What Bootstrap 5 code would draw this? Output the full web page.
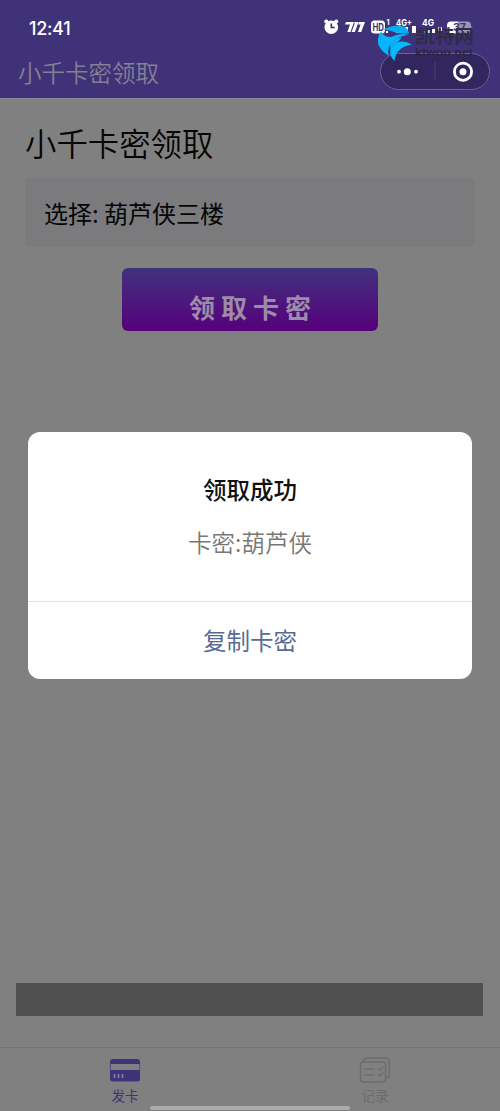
<!DOCTYPE html>
<html lang="zh-CN">
<head>
<meta charset="utf-8">
<meta name="viewport" content="width=device-width, initial-scale=1">
<title>小千卡密领取</title>
<link href="https://cdn.jsdelivr.net/npm/bootstrap@5.3.0/dist/css/bootstrap.min.css" rel="stylesheet">
<style>
body{font-family:"Noto Sans CJK SC",sans-serif;background:#808080;color:#050505;line-height:1}
.phone{height:1111px;overflow:hidden}
.topbar{height:99px;background:#403279;border-bottom:1px solid #8b8794}
.status{height:54px;padding:4px 27px 0 29px}
.clock{font:500 18px/1 Inter,sans-serif;color:#fff;letter-spacing:-.3px}
.icons{left:320px;top:14px}
.app-title{font-size:23.5px;font-weight:350;color:#858092;padding:7px 0 0 18px}
.capsule{right:10px;top:53px;width:110px;height:37px;border:1px solid #6b6293;border-radius:19px;background:#31265d}
.brand{left:376px;top:22px}
.page-title{font-size:31.4px;font-weight:350;line-height:40px;padding:24px 0 0 25px;margin:0}
.picker{height:69px;margin:15px 25px 0;padding-left:19px;background:#7b7b7d;border-radius:5px;font-size:24px;font-weight:400}
.claim{width:256px;height:63px;margin-top:21px;padding:14px 0 0 6px;border:0;border-radius:6px;background:linear-gradient(#40327d,#57007c);color:#9d8ba7;font-size:26px;font-weight:700;letter-spacing:6px;line-height:1}
.strip{height:33px;margin:0 17px 31px 16px;background:#505050}
.tabs{height:64px;border-top:1px solid #707070}
.tab-item{padding-top:9px;font-size:13.5px;color:#6c6c6c}
.tab-item.on{color:#403279}
.tab-item span{margin-top:6px}
.home-line{left:150px;bottom:1px;width:200px;height:4px;border-radius:2px;background:#aaa}
.dialog-box{left:28px;top:432px;width:444px;height:247px;background:#fff;border-radius:12px}
.dialog-main{height:170px;border-bottom:1px solid #e3e3e3;padding-top:45px}
.dialog-main h2{font-size:23.5px;font-weight:500;color:#111;margin:0;line-height:24px}
.dialog-main p{font-size:23.5px;font-weight:350;color:#777;margin:29px 0 0;line-height:24px}
.copy{font-size:23.5px;color:#576b95;border:0;background:none;padding:1px 0 0}
</style>
</head>
<body>
<div class="phone position-relative d-flex flex-column">
  <header class="topbar position-relative flex-shrink-0">
    <div class="status d-flex align-items-center"><span class="clock">12:41</span></div>
    <svg class="icons position-absolute" width="160" height="26" viewBox="320 14 160 26">
      <g fill="#fff"><circle cx="331.300" cy="27.200" r="6.800"/><circle cx="326.300" cy="21.500" r="2.100"/><circle cx="336.300" cy="21.500" r="2.100"/>
      <path d="M346 22h8l-3.500 10h-3.200l2.700-7.500h-5zM354.500 22h4l-3.600 10h-3.300l2.800-7.500zM359 22h6l-3.800 10h-3.300l2.700-7.500h-2.500z"/>
      <rect x="371" y="20.500" width="14" height="13" rx="3.500"/>
      <path d="M386 33v-2h2v2zM396 33v-4h3v4zM401 33v-5h3v5zM405 33v-6h3v6zM412 33v-7h4v7zM422 33v-2h3v2zM427 33v-3h3v3zM432 33v-4h3v4zM438 33v-6h4v6z"/>
      <path d="M451 21.500h7v12h-7q-4 0-4-4v-4q0-4 4-4"/></g>
      <path d="M331.300 23.500v4h3.500" fill="none" stroke="#403279" stroke-width="1.700"/>
      <path d="M458 21.500h9q4 0 4 4v4q0 4-4 4h-9zM471.500 25.500q1.500 2 0 4z" fill="#9d94ba"/>
      <g font-family="Inter,sans-serif" font-weight="700"><text x="372.500" y="30.600" font-size="10" fill="#403279" textLength="11.500" lengthAdjust="spacingAndGlyphs">HD</text>
      <text x="386.500" y="25" font-size="7" fill="#fff">1</text><text x="396" y="26" font-size="8.800" fill="#fff" textLength="16" lengthAdjust="spacingAndGlyphs">4G+</text><text x="422" y="26" font-size="8.800" fill="#fff" textLength="12" lengthAdjust="spacingAndGlyphs">4G</text>
      <text x="453" y="30.500" font-size="10.500" fill="#403568" textLength="13" lengthAdjust="spacingAndGlyphs">37</text></g>
    </svg>
    <div class="app-title">小千卡密领取</div>
    <div class="capsule position-absolute">
      <svg class="d-block" width="108" height="35" viewBox="381 54 108 35"><g fill="#fff"><circle cx="399" cy="71.700" r="1.900"/><circle cx="407.300" cy="71.700" r="3.500"/><circle cx="416" cy="71.700" r="1.900"/><circle cx="463" cy="71.700" r="3.500"/></g><path d="M435 62v19" stroke="#4b4175"/><circle cx="463" cy="71.700" r="8.600" fill="none" stroke="#fff" stroke-width="2.800"/></svg>
    </div>
    <svg class="brand position-absolute" width="104" height="40" viewBox="376 22 104 40">
      <path d="M383 29.500Q391 25.500 399 25.500Q408 26 409 33.500Q398 34 391 31Q387 29.500 383 29.500Z" fill="#08aef5"/>
      <path d="M381 31.500Q384 37 391 37Q399 33 409 34.500Q395 37 390 45Q387 51 389 56Q381 51 378.500 45Q376.500 38 381 31.500Z" fill="#08b4fb"/>
      <path d="M412 44.500Q403 46 399.500 50Q395.500 53 394.500 61Q389 56 390.500 50Q393 42 402 41.500Q407 41.500 412 44.500Z" fill="#06b9ff"/>
      <path d="M390 45Q394 38 402 37L398 42Q392 45 390.500 52Z" fill="#08aef5"/>
      <text x="415" y="42.500" font-family="Noto Sans CJK SC,sans-serif" font-size="18" font-weight="700" fill="#302b46" textLength="59" lengthAdjust="spacingAndGlyphs">凯特网</text>
      <text x="415" y="55.500" font-family="Liberation Sans,sans-serif" font-size="10" font-weight="700" fill="#2c2744" textLength="58" lengthAdjust="spacingAndGlyphs">ktwop.net</text>
    </svg>
  </header>
  <main class="flex-grow-1 d-flex flex-column">
    <h1 class="page-title">小千卡密领取</h1>
    <div class="picker d-flex align-items-center">选择: 葫芦侠三楼</div>
    <button class="claim btn align-self-center">领取卡密</button>
    <div class="strip mt-auto"></div>
  </main>
  <nav class="tabs row g-0 flex-shrink-0">
    <div class="tab-item on col-6 d-flex flex-column align-items-center">
      <svg width="32" height="26" viewBox="0 0 32 26"><path d="M4 2h24q3 0 3 3v2H1V5q0-3 3-3M1 13h30v9q0 2.500-3 2.500H4q-3 0-3-2.500z" fill="currentColor"/><path d="M1.300 7v6M30.700 7v6" stroke="currentColor" stroke-width=".7"/><path d="M5.500 17v4M9.500 17v4M13.500 17v4" stroke="#8c83a7" stroke-width="1.600"/></svg>
      <span>发卡</span>
    </div>
    <div class="tab-item col-6 d-flex flex-column align-items-center">
      <svg width="32" height="26" viewBox="0 0 32 26" fill="none" stroke="currentColor" stroke-width="1.400" stroke-linecap="round"><rect x="1.500" y="5" width="25" height="20" rx="3"/><path d="M4.500 4.500Q5 1 8 1h19q3.300 0 3.300 3v14q0 3-3.300 3.500M6 12h9M6 18h9M19 11.500l2 1.500 3-3M19 17.500l2 1.500 3-3"/></svg>
      <span>记录</span>
    </div>
  </nav>
  <div class="home-line position-absolute"></div>
  <section class="dialog-box position-absolute d-flex flex-column text-center" role="dialog">
    <div class="dialog-main"><h2>领取成功</h2><p>卡密:葫芦侠</p></div>
    <button class="copy flex-grow-1">复制卡密</button>
  </section>
</div>
<script src="https://cdn.jsdelivr.net/npm/bootstrap@5.3.0/dist/js/bootstrap.bundle.min.js"></script>
</body>
</html>
